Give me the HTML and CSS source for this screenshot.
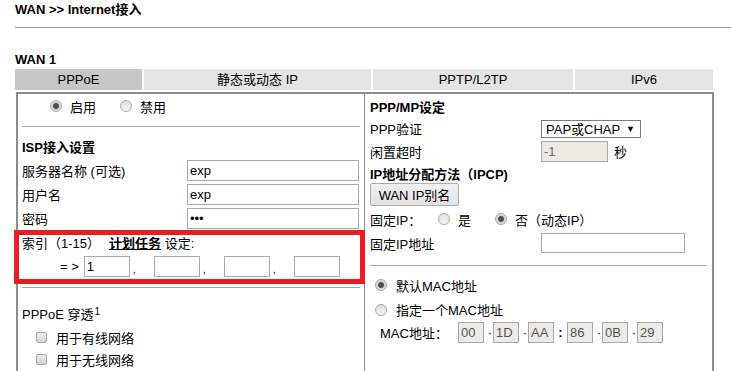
FILE: index.html
```html
<!DOCTYPE html>
<html lang="zh-CN">

<head>
  <meta charset="UTF-8">
  <meta name="viewport" content="width=device-width, initial-scale=1.0">
  <title>WAN &gt;&gt; Internet接入</title>
  <link rel="stylesheet" href="styles.css">
</head>

<body>
  <div class="page">
    <div class="title">WAN &gt;&gt; Internet接入</div>
    <div class="rule"></div>
    <div class="wan-name">WAN 1</div>

    <div class="tabs">
      <div class="tab active">PPPoE</div>
      <div class="tab">静态或动态 IP</div>
      <div class="tab">PPTP/L2TP</div>
      <div class="tab">IPv6</div>
    </div>

    <div class="panel">
      <div class="col left">
        <div class="row switch">
          <label class="opt"><input type="radio" name="pppoe" checked> 启用</label>
          <label class="opt"><input type="radio" name="pppoe"> 禁用</label>
        </div>
        <div class="sep"></div>

        <div class="row head isp">ISP接入设置</div>
        <div class="row field">
          <span class="label">服务器名称 (可选)</span>
          <input type="text" class="txt" value="exp">
        </div>
        <div class="row field">
          <span class="label">用户名</span>
          <input type="text" class="txt" value="exp">
        </div>
        <div class="row field">
          <span class="label">密码</span>
          <input type="password" class="txt" value="exp">
        </div>
        <div class="row">
          索引（1-15）<a href="#" class="plan">计划任务</a>&nbsp;设定:
        </div>
        <div class="row index">
          <span class="arrow">=&nbsp;&gt;</span>
          <input type="text" class="idx" value="1"><span class="comma">,</span>
          <input type="text" class="idx"><span class="comma">,</span>
          <input type="text" class="idx"><span class="comma">,</span>
          <input type="text" class="idx">
        </div>
        <div class="sep low"></div>

        <div class="row pass">PPPoE 穿透<sup>1</sup></div>
        <label class="row check"><input type="checkbox"> 用于有线网络</label>
        <label class="row check last"><input type="checkbox"> 用于无线网络</label>
      </div>

      <div class="col right">
        <div class="row head">PPP/MP设定</div>
        <div class="row field r-auth">
          <span class="label">PPP验证</span>
          <span class="select">PAP或CHAP <span class="caret">▼</span></span>
        </div>
        <div class="row field r-idle">
          <span class="label">闲置超时</span>
          <input type="text" class="txt idle" value="-1" disabled>
          <span class="unit">秒</span>
        </div>
        <div class="row head r-ipcp">IP地址分配方法（IPCP)</div>
        <div class="row r-btn">
          <button type="button" class="btn">WAN IP别名</button>
        </div>
        <div class="row r-fixed">
          <span class="fixed-label">固定IP：</span>
          <label class="opt"><input type="radio" name="fixed"> 是</label>
          <label class="opt"><input type="radio" name="fixed" checked> 否（动态IP）</label>
        </div>
        <div class="row field r-addr">
          <span class="label">固定IP地址</span>
          <input type="text" class="txt addr">
        </div>
        <div class="sep mac-sep"></div>

        <label class="row mac-opt first"><input type="radio" name="mac" checked> 默认MAC地址</label>
        <label class="row mac-opt"><input type="radio" name="mac"> 指定一个MAC地址</label>
        <div class="row mac">
          <span class="mac-label">MAC地址：</span>
          <input type="text" class="oct" value="00" disabled><span class="dot">·</span>
          <input type="text" class="oct" value="1D" disabled><span class="dot">·</span>
          <input type="text" class="oct" value="AA" disabled><span class="colon">:</span>
          <input type="text" class="oct" value="86" disabled><span class="dot">·</span>
          <input type="text" class="oct" value="0B" disabled><span class="dot">·</span>
          <input type="text" class="oct" value="29" disabled>
        </div>
      </div>
    </div>
  </div>

  <!-- highlight drawn over the schedule setting -->
  <div class="mark"></div>
</body>

</html>
```

FILE: styles.css
```css
* {
  box-sizing: border-box;
  font-family: 'Liberation Sans', 'Noto Sans CJK SC', sans-serif;
}

body {
  margin: 0;
  font-size: 13px;
  color: #000;
  overflow: hidden;
}

.page {
  padding-left: 15px;
}

.title {
  padding-top: 2px;
  line-height: 16px;
  font-weight: bold;
}

.rule {
  height: 1px;
  margin-top: 9px;
  background-color: #9a9a9a;
}

.wan-name {
  margin-top: 24px;
  line-height: 16px;
  font-weight: bold;
}

.tabs {
  display: grid;
  grid-template-columns: 127px 227px 200px 138px;
  gap: 2px;
  margin-top: 1px;
}

.tab {
  height: 21px;
  line-height: 21px;
  text-align: center;
  background-color: #e4e4e4;
}

.tab.active {
  background-color: #c6c6c6;
}

.panel {
  display: grid;
  grid-template-columns: 347px 1fr;
  width: 698px;
  height: 279px;
  margin: 2px 0 0 1px;
  border: 2px solid #8c8c8c;
  border-bottom: none;
  overflow: hidden;
}

.col.left {
  padding: 0 4px;
  border-right: 1px solid #8c8c8c;
}

.col.right {
  padding: 0 5px;
}

.row {
  display: flex;
  align-items: center;
  height: 24px;
  white-space: nowrap;
}

.head {
  font-weight: bold;
}

.head.isp {
  margin-top: 7px;
}

.sep {
  height: 1px;
  margin-top: 8px;
  background-color: #a8a8a8;
}

.sep.low {
  margin-top: 9px;
}

/* radios and checkboxes drawn in the old grey style */
input[type=radio] {
  appearance: none;
  width: 12px;
  height: 12px;
  margin: 0;
  border: 1px solid #a9a9a9;
  border-radius: 50%;
  background: linear-gradient(#dcdcdc, #f6f6f6);
}

input[type=radio]:checked {
  background: radial-gradient(circle, #505050 0 2.5px, #cfcfcf 3.5px, #f2f2f2 6px);
}

input[type=checkbox] {
  appearance: none;
  width: 11px;
  height: 11px;
  margin: 0;
  border: 1px solid #a9a9a9;
  border-radius: 2px;
  background: linear-gradient(#eeeeee, #d4d4d4);
}

.opt {
  display: flex;
  align-items: center;
  gap: 8px;
}

.switch .opt:first-child {
  margin-left: 28px;
  margin-right: 24px;
}

.field .label {
  width: 165px;
}

.txt {
  height: 21px;
  padding: 0 2px;
  border: 1px solid #a9a9a9;
  font-size: 13px;
  color: #000;
}

.left .txt {
  width: 172px;
}

.plan {
  margin-left: 9px;
  color: #000;
  font-weight: bold;
}

.index {
  padding-left: 38px;
}

.arrow {
  margin-right: 5px;
}

.idx {
  width: 46px;
  height: 21px;
  padding: 0 2px;
  border: 1px solid #a9a9a9;
  font-size: 13px;
}

.comma {
  width: 24px;
  padding-left: 3px;
  font-size: 11px;
  align-self: flex-end;
  padding-bottom: 3px;
}

.pass {
  margin-top: 13px;
}

.pass sup {
  font-size: 10px;
  margin-left: 1px;
  position: relative;
  top: -2px;
}

.check {
  gap: 9px;
  padding-left: 14px;
}

.check.last {
  height: 21px;
}

/* right column */
.right .field .label {
  width: 171px;
}

.r-auth {
  height: 21px;
}

.select {
  display: flex;
  justify-content: space-between;
  align-items: center;
  width: 100px;
  height: 18px;
  padding: 0 5px 0 4px;
  border: 1px solid #7a7a7a;
}

.caret {
  font-size: 9px;
}

.txt.idle {
  width: 67px;
  background-color: #ebebe4;
  color: #6d6d6d;
}

.unit {
  margin-left: 6px;
}

.r-ipcp {
  height: 20px;
}

.r-btn {
  height: 23px;
}

.btn {
  width: 89px;
  height: 23px;
  padding: 0;
  border: 1px solid #adadad;
  border-radius: 2px;
  background: linear-gradient(#f0f0f0, #e2e2e2);
  font-size: 13px;
  color: #000;
}

.r-fixed {
  height: 26px;
}

.fixed-label {
  width: 68px;
}

.r-fixed .opt:nth-of-type(1) {
  margin-right: 24px;
}

.r-addr {
  height: 22px;
}

.txt.addr {
  width: 144px;
  height: 20px;
}

.mac-sep {
  margin-top: 11px;
}

.mac-opt {
  gap: 9px;
  padding-left: 5px;
}

.mac-opt.first {
  margin-top: 7px;
}

.mac-opt:not(.first) {
  height: 25px;
}

.mac {
  height: 20px;
}

.mac-label {
  width: 88px;
  padding-left: 10px;
}

.oct {
  width: 26px;
  height: 21px;
  padding: 0 2px;
  border: 1px solid #a9a9a9;
  background-color: #ebebe4;
  font-size: 13px;
  color: #555;
}

.dot {
  width: 9px;
  text-align: right;
  padding-right: 1px;
}

.colon {
  width: 13px;
  text-align: center;
  font-weight: bold;
}

.mark {
  position: absolute;
  left: 14px;
  top: 230px;
  width: 351px;
  height: 54px;
  border: 5px solid #ed1c24;
}
```
